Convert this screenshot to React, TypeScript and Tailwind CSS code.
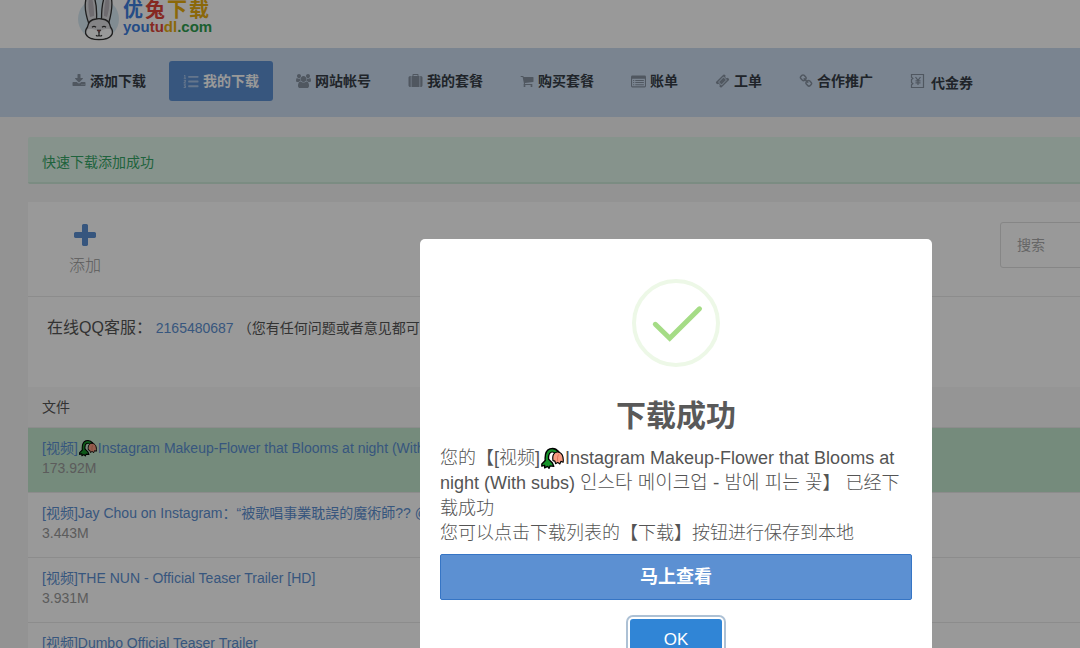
import React from 'react';
import { FaListOl } from 'react-icons/fa';

interface GlyphProps {
  d: string;
  box?: string;
  className?: string;
}

const Glyph: React.FC<GlyphProps> = ({ d, box = '0 0 1792 1792', className = 'w-[14px] h-[14px]' }) => (
  <svg viewBox={box} className={className} fill="currentColor" aria-hidden="true">
    <path d={d} />
  </svg>
);

const PATHS = {
  download:
    'M1344 1344q0-26-19-45t-45-19-45 19-19 45 19 45 45 19 45-19 19-45zm256 0q0-26-19-45t-45-19-45 19-19 45 19 45 45 19 45-19 19-45zm128-224v320q0 40-28 68t-68 28h-1472q-40 0-68-28t-28-68v-320q0-40 28-68t68-28h465l135 136q58 56 136 56t136-56l136-136h464q40 0 68 28t28 68zm-325-569q17 41-14 70l-448 448q-18 19-45 19t-45-19l-448-448q-31-29-14-70 17-39 59-39h256v-448q0-26 19-45t45-19h256q26 0 45 19t19 45v448h256q42 0 59 39z',
  users:
    'M657 896q-162 5-265 128h-134q-82 0-138-40.5t-56-118.5q0-353 124-353 6 0 43.5 21t97.5 42.5 119 21.5q67 0 133-23-5 37-5 66 0 139 81 256zm1071 637q0 120-73 189.5t-194 69.5h-874q-121 0-194-69.5t-73-189.5q0-53 3.5-103.5t14-109 26.5-108.5 43-97.5 62-81 85.5-53.5 111.5-20q10 0 43 21.5t73 48 107 48 135 21.5 135-21.5 107-48 73-48 43-21.5q61 0 111.5 20t85.5 53.5 62 81 43 97.5 26.5 108.5 14 109 3.5 103.5zm-1024-1277q0 106-75 181t-181 75-181-75-75-181 75-181 181-75 181 75 75 181zm704 384q0 159-112.5 271.5t-271.5 112.5-271.5-112.5-112.5-271.5 112.5-271.5 271.5-112.5 271.5 112.5 112.5 271.5zm576 225q0 78-56 118.5t-138 40.5h-134q-103-123-265-128 81-117 81-256 0-29-5-66 66 23 133 23 59 0 119-21.5t97.5-42.5 43.5-21q124 0 124 353zm-128-609q0 106-75 181t-181 75-181-75-75-181 75-181 181-75 181 75 75 181z',
  suitcase:
    'M640 256h512v-128h-512v128zm-352 0v1408h-64q-92 0-158-66t-66-158v-960q0-92 66-158t158-66h64zm1120 0v1408h-1024v-1408h128v-160q0-40 28-68t68-28h576q40 0 68 28t28 68v160h128zm384 224v960q0 92-66 158t-158 66h-64v-1408h64q92 0 158 66t66 158z',
  cart:
    'M704 1536q0 52-38 90t-90 38-90-38-38-90 38-90 90-38 90 38 38 90zm896 0q0 52-38 90t-90 38-90-38-38-90 38-90 90-38 90 38 38 90zm128-1088v512q0 24-16.5 42.5t-40.5 21.5l-1044 122q13 60 13 70 0 16-24 64h920q26 0 45 19t19 45-19 45-45 19h-1024q-26 0-45-19t-19-45q0-11 8-31.5t16-36 21.5-40 15.5-29.5l-177-823h-204q-26 0-45-19t-19-45 19-45 45-19h256q16 0 28.5 6.5t19.5 15.5 13 24.5 8 26 5.5 29.5 4.5 26h1201q26 0 45 19t19 45z',
  listAlt:
    'M160 192h1472q160 0 160 160v1088q0 160-160 160h-1472q-160 0-160-160v-1088q0-160 160-160zm-32 384v864q0 32 32 32h1472q32 0 32-32v-864zm128 128h128v128h-128zm0 256h128v128h-128zm0 256h128v128h-128zm256-512h1024v128h-1024zm0 256h1024v128h-1024zm0 256h1024v128h-1024z',
  ticket:
    'M1024 452l316 316-572 572-316-316zm-211 979l618-618q19-19 19-45t-19-45l-362-362q-18-18-45-18t-45 18l-618 618q-19 19-19 45t19 45l362 362q18 18 45 18t45-18zm889-637l-907 908q-37 37-90.5 37t-90.5-37l-126-126q56-56 56-136t-56-136-136-56-136 56l-125-126q-37-37-37-90.5t37-90.5l907-906q37-37 90.5-37t90.5 37l125 125q-56 56-56 136t56 136 136 56 136-56l126 125q37 37 37 90.5t-37 90.5z',
  link:
    'M1520 1216q0-40-28-68l-208-208q-28-28-68-28-42 0-72 32 3 3 19 18.5t21.5 21.5 15 19 13 25.5 3.5 27.5q0 40-28 68t-68 28q-15 0-27.5-3.5t-25.5-13-19-15-21.5-21.5-18.5-19q-33 31-33 73 0 40 28 68l206 207q27 27 68 27 40 0 68-26l147-146q28-28 28-67zm-703-705q0-40-28-68l-206-207q-28-28-68-28-39 0-68 27l-147 146q-28 28-28 67 0 40 28 68l208 208q27 27 68 27 42 0 72-31-3-3-19-18.5t-21.5-21.5-15-19-13-25.5-3.5-27.5q0-40 28-68t68-28q15 0 27.5 3.5t25.5 13 19 15 21.5 21.5 18.5 19q33-31 33-73zm895 705q0 120-85 203l-147 146q-83 83-203 83-121 0-204-85l-206-207q-83-83-83-203 0-123 88-209l-88-88q-86 88-208 88-120 0-204-84l-208-208q-84-84-84-204t85-203l147-146q83-83 203-83 121 0 204 85l206 207q83 83 83 203 0 123-88 209l88 88q86-88 208-88 120 0 204 84l208 208q84 84 84 204z',
  plus:
    'M1600 736v192q0 40-28 68t-68 28h-416v416q0 40-28 68t-68 28h-192q-40 0-68-28t-28-68v-416h-416q-40 0-68-28t-28-68v-192q0-40 28-68t68-28h416v-416q0-40 28-68t68-28h192q40 0 68 28t28 68v416h416q40 0 68 28t28 68z'
};

const Voucher = () => (
  <svg viewBox="0 0 14 16" className="w-[15px] h-4" fill="none" stroke="currentColor" strokeWidth="1.2" aria-hidden="true">
    <path d="M1 1.5h12v13H1v-2.6l1.4-1.2L1 9.4V6.6l1.4-1.2L1 4.2z" />
    <path d="M5 4l2.5 3.4L10 4M7.5 7.4V12M5 7.8h5M5 9.9h5" />
  </svg>
);

const RabbitLogo = () => (
  <svg viewBox="0 0 42 41" className="w-[42px] h-[41px]" aria-hidden="true">
    <circle cx="20.5" cy="19" r="20.5" fill="#d8e9f3" />
    <g fill="#dcdce0" stroke="#333" strokeWidth="1.3">
      <path d="M11 24C8 16 6 5 8.500-3h7.500c2.500 6 3 14 2.500 23M23.500 20c0-9 .5-17 3-23h6.500c2.500 8 0 18-2.500 27" />
      <path d="M18 19q3-.6 6 0c5 .5 8 4 8.500 8 4.500 6 1.500 12.500-11.500 12.500S5 33 9.500 27c.5-4 3.500-7.500 8.500-8z" />
    </g>
    <path d="M12 17C10.500 11 9.800 4 11-2h3c1.500 5 2.200 12 2 18zM26 16c0-5 .5-12 2-18h3c1 6 0 13-2 19z" fill="#b9b4bb" />
    <path d="M9.500 29.500c3-2 7 1 11.500 1s8.500-3 11.500-1c2.500 6-2.500 9.300-11.500 9.300S7 35.500 9.500 29.500z" fill="#fff" />
    <path d="M14 27.200q2-1.500 4 0M24 27.200q2-1.500 4 0M21 32v3.500M18 35.300q1.500 1.300 3 .2 1.500 1.100 3-.2" fill="none" stroke="#333" strokeWidth="1.200" />
    <path d="M19 30h4l-2 2.500z" fill="#a34a4a" stroke="#333" strokeWidth=".6" />
  </svg>
);

// wilted flower emoji
const WiltedFlower = ({ className }: { className: string }) => (
  <svg viewBox="0 0 22 21" className={className} role="img" aria-label="🥀">
    <path d="M6 15C5 9 6 4.500 9 3.300c3-1 5 .2 6.500 2" fill="none" stroke="#000" strokeWidth="4.600" strokeLinecap="round" />
    <path d="M5.500 11.500L.8 16.300v2l2.700-.8v2.500l2.700-1.500 1.500 1.800 1-2.300 3.500.5-1.300-3.200-3.500-3.500z" fill="#17942a" stroke="#000" strokeWidth="1.300" strokeLinejoin="round" />
    <path d="M6.200 16C4.800 9.500 6 4.500 9.200 3.400c2.600-.8 4.500.4 5.800 2" fill="none" stroke="#17942a" strokeWidth="2.200" />
    <path d="M11.500 13c-1-5 1-8.500 4.500-8.200 4 .2 5.800 4 5.200 9.700l-2.200-.8-1 2.500-2-1.500-2 1.300-.7-2.500z" fill="#f79c82" stroke="#000" strokeWidth="1.100" strokeLinejoin="round" />
    <path d="M16 13.500c-.5-3 0-5 1-6.500" fill="none" stroke="#d96f5a" strokeWidth=".9" />
  </svg>
);

const navItems = [
  { label: '添加下载', icon: <Glyph d={PATHS.download} /> },
  { label: '我的下载', icon: <FaListOl className="w-4 h-[15px]" />, active: true },
  { label: '网站帐号', icon: <Glyph d={PATHS.users} box="64 0 1920 1792" className="w-[15px] h-[14px]" /> },
  { label: '我的套餐', icon: <Glyph d={PATHS.suitcase} className="w-[15px] h-[14px]" /> },
  { label: '购买套餐', icon: <Glyph d={PATHS.cart} /> },
  { label: '账单', icon: <Glyph d={PATHS.listAlt} className="w-[15px] h-[15px]" /> },
  { label: '工单', icon: <Glyph d={PATHS.ticket} className="w-[15px] h-[14px]" /> },
  { label: '合作推广', icon: <Glyph d={PATHS.link} /> },
  { label: '代金券', icon: <Voucher />, low: true }
];

const files = [
  {
    name: 'Instagram Makeup-Flower that Blooms at night (With subs) 인스타 메이크업 - 밤에 피는 꽃',
    size: '173.92M',
    flower: true,
    done: true
  },
  { name: 'Jay Chou on Instagram：“被歌唱事業耽誤的魔術師?? @jaychou”', size: '3.443M' },
  { name: 'THE NUN - Official Teaser Trailer [HD]', size: '3.931M' },
  { name: 'Dumbo Official Teaser Trailer', size: '4.102M' }
];

const Header = () => (
  <header className="h-12 bg-white pl-[78px] flex items-start gap-[3px] overflow-hidden">
    <RabbitLogo />
    <div className="font-bold">
      <div className="flex gap-[2px] text-[20px] leading-[21px]">
        <span className="text-[#3f7fe0]">优</span>
        <span className="text-[#e0453a]">兔</span>
        <span className="text-[#e8ad10]">下</span>
        <span className="text-[#e8ad10]">载</span>
      </div>
      <div className="text-[15px] leading-[12px]">
        <span className="text-[#3f7fe0]">you</span>
        <span className="text-[#e0453a]">tu</span>
        <span className="text-[#e8ad10]">dl</span>
        <span className="text-[#2f9e4f]">.com</span>
      </div>
    </div>
  </header>
);

const Nav = () => (
  <nav className="bg-[#cbdcf0] pl-[58px] pt-[13px] pb-4 flex gap-[9px]">
    {navItems.map((item) => (
      <a
        key={item.label}
        href="#"
        className={
          item.active
            ? 'h-10 px-[14px] flex items-center gap-1 rounded-[3px] bg-[#5c90d2] text-white font-bold'
            : 'h-10 px-[14px] flex items-center gap-1 text-[#363c46] font-bold'
        }
      >
        <span className={item.active ? 'text-[#a9c5ea]' : 'text-[#8591a0]'}>{item.icon}</span>
        <span className={item.low ? 'pt-1 pl-[2px]' : ''}>{item.label}</span>
      </a>
    ))}
  </nav>
);

const FileTable = () => (
  <table className="w-full text-left">
    <thead>
      <tr className="bg-[#f9f9f9]">
        <th className="h-10 px-[14px] font-normal text-[#555]">文件</th>
      </tr>
    </thead>
    <tbody>
      {files.map((file) => (
        <tr key={file.name} className={file.done ? 'bg-[#c3e8cf]' : 'bg-white'}>
          <td className="h-[65px] px-[14px] pt-[10px] align-top border-t border-[#e9e9e9] leading-5 whitespace-nowrap">
            <a href="#" className="text-[#5c90d2]">
              [视频]
              {file.flower && <WiltedFlower className="inline-block w-5 h-[18px] px-px align-[-4px]" />}
              {file.name}
            </a>
            <div className="text-[#999]">{file.size}</div>
          </td>
        </tr>
      ))}
    </tbody>
  </table>
);

const SuccessModal = () => (
  <div className="absolute inset-0 bg-black/40 flex justify-center items-start pt-[239px] overflow-hidden">
    <div role="dialog" aria-labelledby="modal-title" className="w-[512px] bg-white rounded-[5px] p-5 flex flex-col items-center text-[#545454]">
      <svg viewBox="0 0 88 88" className="w-[88px] h-[88px] mt-5" fill="none" aria-hidden="true">
        <circle cx="44" cy="44" r="42" stroke="#edf8e7" strokeWidth="4" />
        <path d="M23.300 45.300L37.700 59.200L67.500 29.800" stroke="#a5dc86" strokeWidth="5" strokeLinecap="round" />
      </svg>
      <h2 id="modal-title" className="mt-[29px] text-[30px] leading-10 font-bold text-[#595959]">下载成功</h2>
      <div className="mt-[10px] w-full text-[18px] leading-[25px] font-light">
        您的【[视频]
        <WiltedFlower className="inline-block w-[25px] h-[22px] px-px align-[-5px]" />
        <span className="font-normal">Instagram Makeup-Flower that Blooms at night (With subs)</span>{' '}
        <span lang="ko" className="text-[19px] leading-5">인스타 메이크업 - 밤에 피는 꽃</span>】 已经下载成功
        <br />
        您可以点击下载列表的【下载】按钮进行保存到本地
      </div>
      <button className="mt-2 w-full h-[46px] rounded-[2px] border border-[#3675c5] bg-[#5c90d2] text-white text-[18px] font-bold">
        马上查看
      </button>
      <button className="mt-[19px] h-[41px] px-8 w-[92px] rounded-[3px] bg-[#3085d6] text-white text-[17px] shadow-[0_0_0_2px_#fff,0_0_0_4px_rgba(50,100,150,0.4)]">
        OK
      </button>
    </div>
  </div>
);

const App: React.FC = () => {
  return (
    <div className="h-screen overflow-hidden">
      <div className="relative min-w-[1352px] h-full overflow-hidden bg-[#f5f5f5] text-[14px] leading-5 text-[#555] font-['Liberation_Sans','Noto_Sans_CJK_SC',sans-serif]">
        <Header />
        <Nav />
        <main className="px-7 pt-5">
          <div className="px-[14px] h-[47px] flex items-center pt-1 rounded-[2px] bg-[#e0f5e9] border-b-2 border-[#cdead9] text-[#35a566]">
            快速下载添加成功
          </div>
          <section className="mt-[18px] bg-white">
            <div className="h-[95px] px-7 pt-5 flex justify-between items-start border-b border-[#e9e9e9]">
              <button className="w-[58px] flex flex-col items-center text-[16px] text-[#999] font-light">
                <Glyph d={PATHS.plus} className="w-[28px] h-[28px] text-[#5c90d2]" />
                <span className="mt-[6px]">添加</span>
              </button>
              <input
                type="text"
                aria-label="搜索"
                placeholder="搜索"
                className="w-[296px] h-[46px] px-4 rounded-[3px] border border-[#e0e0e0] bg-white placeholder:text-[#aaa]"
              />
            </div>
            <div className="h-[90px] pl-[19px] pt-[21px] whitespace-nowrap">
              <span className="text-[16px]">在线QQ客服：</span>{' '}
              <a href="#" className="text-[#5c90d2]">2165480687</a>
              <span className="pl-1">（您有任何问题或者意见都可以联系我们）</span>
            </div>
            <FileTable />
          </section>
        </main>
        <SuccessModal />
      </div>
    </div>
  );
};

export default App;
